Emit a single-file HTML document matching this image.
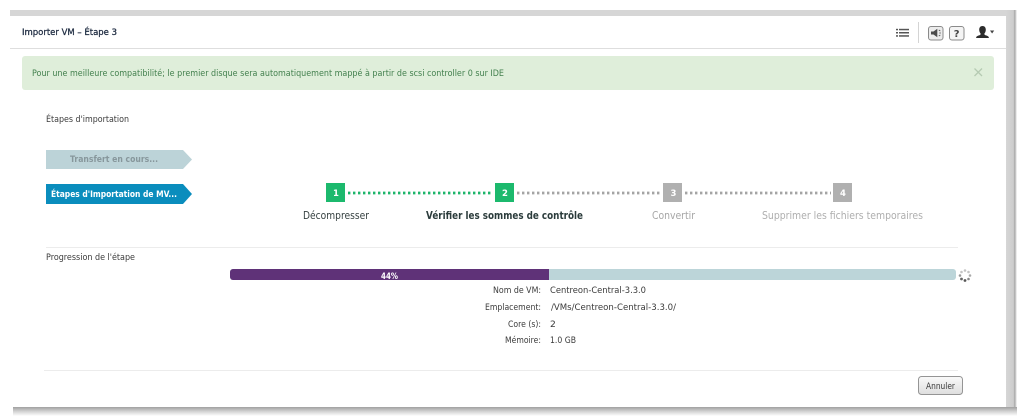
<!DOCTYPE html>
<html><head><meta charset="utf-8"><title>Importer VM</title>
<style>
html,body{margin:0;padding:0;background:#fff;width:1023px;height:417px;overflow:hidden}
svg{display:block}
text{font-family:"DejaVu Sans","Liberation Sans",sans-serif;font-size:9.2px;fill:#3a3a3a;filter:url(#b)}
.b{font-weight:bold}
.l{font-size:10.600px}
</style></head><body>
<svg width="1023" height="417" viewBox="0 0 1023 417" xmlns="http://www.w3.org/2000/svg">
<defs>
<filter id="b" x="-5%" y="-30%" width="110%" height="160%"><feGaussianBlur stdDeviation="0.25"/></filter>
<linearGradient id="sh" x1="0" y1="0" x2="0" y2="1"><stop offset="0" stop-color="#a0a0a0"/><stop offset="0.45" stop-color="#cfcfcf"/><stop offset="1" stop-color="#fff"/></linearGradient>
<linearGradient id="sr" x1="0" y1="0" x2="1" y2="0"><stop offset="0" stop-color="#d6d6d6"/><stop offset="0.68" stop-color="#cdcdcd"/><stop offset="0.8" stop-color="#a8a8a8"/><stop offset="1" stop-color="#fff"/></linearGradient>
<linearGradient id="btn" x1="0" y1="0" x2="0" y2="1"><stop offset="0" stop-color="#fafafa"/><stop offset="1" stop-color="#dedede"/></linearGradient>
</defs>
<rect width="1023" height="417" fill="#fff"/>
<!-- window frame -->
<rect x="10" y="10" width="1003" height="6" fill="#d6d6d6"/>
<rect x="1006" y="10" width="11" height="400" fill="url(#sr)"/>
<rect x="13" y="407" width="1004" height="9" fill="url(#sh)"/>
<rect x="10" y="16" width="996" height="391" fill="#fff"/>
<!-- header -->
<text x="22" y="35" textLength="95" lengthAdjust="spacingAndGlyphs" style="fill:#1f2c42;stroke:#1f2c42;stroke-width:.3">Importer VM – Étape 3</text>
<rect x="10" y="48" width="996" height="1" fill="#dedede"/>
<!-- list icon -->
<g fill="#555"><rect x="899" y="28.800" width="10" height="1.500"/><rect x="899" y="32" width="10" height="1.500"/><rect x="899" y="35.200" width="10" height="1.500"/><rect x="896" y="28.800" width="2" height="1.500"/><rect x="896" y="32" width="2" height="1.500"/><rect x="896" y="35.200" width="2" height="1.500"/></g>
<rect x="918" y="22" width="1" height="21" fill="#d4d4d4"/>
<!-- speaker -->
<rect x="928.500" y="26.500" width="14.500" height="13.500" rx="2.500" fill="#ececec" stroke="#8a8a8a"/>
<path d="M931 31.500h2.500l3.800-2.800v8.600l-3.800-2.800H931z" fill="#4a4a4a"/>
<path d="M938.800 30l1.500 1M939.200 33h1.800M938.800 36l1.500-1" fill="none" stroke="#555" stroke-width=".8"/>
<!-- help -->
<rect x="949.500" y="26.500" width="14.500" height="13.500" rx="2.500" fill="#f4f4f4" stroke="#8a8a8a"/>
<text x="953.700" y="37" class="b" style="font-size:10px;fill:#444">?</text>
<!-- user -->
<path d="M982.500 26c2.200 0 3.300 1.600 3.300 3.700 0 1.800-.8 3.200-1.500 4 .1.900.5 1.300 1.600 1.700 1.600.5 2.900.9 3 2.600h-12.800c.1-1.700 1.400-2.100 3-2.600 1.100-.4 1.500-.8 1.600-1.700-.7-.8-1.500-2.200-1.500-4 0-2.100 1.100-3.700 3.300-3.700z" fill="#2c2c2c"/>
<path d="M990 30.500h4.200l-2.100 3z" fill="#444"/>
<!-- alert -->
<rect x="22" y="56" width="972" height="34" rx="3" fill="#dfeeda"/>
<text x="32" y="76" textLength="472" lengthAdjust="spacingAndGlyphs" style="fill:#43804e">Pour une meilleure compatibilité; le premier disque sera automatiquement mappé à partir de scsi controller 0 sur IDE</text>
<path d="M974.500 68.500l7.500 7.500M982 68.500l-7.500 7.500" stroke="#b5cab2" stroke-width="1.300" fill="none"/>
<text x="46" y="122" textLength="83" lengthAdjust="spacingAndGlyphs">Étapes d'importation</text>
<!-- flow arrows -->
<path d="M46 150H183L192 159.500 183 169H46z" fill="#bcd3d8"/>
<text x="70" y="162" class="b" textLength="88" lengthAdjust="spacingAndGlyphs" style="fill:#87979c">Transfert en cours...</text>
<path d="M46 184H183L192 194 183 204H46z" fill="#0a8dbd"/>
<text x="51" y="197" class="b" textLength="126" lengthAdjust="spacingAndGlyphs" style="fill:#fff">Étapes d'Importation de MV...</text>
<!-- stepper -->
<line x1="348" y1="193" x2="493" y2="193" stroke="#1cb56a" stroke-width="2.800" stroke-dasharray="2.400 2.600"/>
<line x1="517" y1="193" x2="661" y2="193" stroke="#a4a4a4" stroke-width="2.800" stroke-dasharray="2.400 2.600"/>
<line x1="685" y1="193" x2="831" y2="193" stroke="#a4a4a4" stroke-width="2.800" stroke-dasharray="2.400 2.600"/>
<rect x="326" y="183" width="19" height="19" fill="#1cb96d"/>
<rect x="495" y="183" width="19" height="19" fill="#1cb96d"/>
<rect x="663" y="183" width="19" height="19" fill="#b0b0b0"/>
<rect x="833" y="183" width="19" height="19" fill="#b0b0b0"/>
<g><text x="333" y="196" class="b" style="fill:#fff;font-size:8.500px">1</text><text x="502" y="196" class="b" style="fill:#fff;font-size:8.500px">2</text><text x="670.500" y="196" class="b" style="fill:#fff;font-size:8.500px">3</text><text x="840" y="196" class="b" style="fill:#fff;font-size:8.500px">4</text></g>
<text x="303" y="219" class="l" textLength="66" lengthAdjust="spacingAndGlyphs" style="fill:#354040">Décompresser</text>
<text x="426" y="219" class="l b" textLength="157" lengthAdjust="spacingAndGlyphs" style="fill:#2a3a3a">Vérifier les sommes de contrôle</text>
<text x="652" y="219" class="l" textLength="43" lengthAdjust="spacingAndGlyphs" style="fill:#a6a6a6">Convertir</text>
<text x="762" y="219" class="l" textLength="161" lengthAdjust="spacingAndGlyphs" style="fill:#aeaeae">Supprimer les fichiers temporaires</text>
<rect x="46" y="247" width="912" height="1" fill="#ececec"/>
<text x="46" y="260" textLength="89" lengthAdjust="spacingAndGlyphs">Progression de l'étape</text>
<!-- progress -->
<rect x="230" y="269" width="726" height="11" rx="3" fill="#bcd5d9"/>
<path d="M549 269H233a3 3 0 0 0-3 3v5a3 3 0 0 0 3 3H549z" fill="#5f3278"/>
<text x="381" y="279" class="b" textLength="17" lengthAdjust="spacingAndGlyphs" style="fill:#fff;font-size:8.500px">44%</text>
<g><circle cx="965" cy="270.500" r="1.300" fill="#c4c4c4"/><circle cx="968.500" cy="272" r="1.300" fill="#c4c4c4"/><circle cx="970" cy="275.500" r="1.300" fill="#aaa"/><circle cx="968.500" cy="279" r="1.300" fill="#888"/><circle cx="965" cy="280.500" r="1.400" fill="#555"/><circle cx="961.500" cy="279" r="1.400" fill="#666"/><circle cx="960" cy="275.500" r="1.300" fill="#999"/><circle cx="961.500" cy="272" r="1.300" fill="#c4c4c4"/></g>
<!-- details -->
<text x="493" y="293" textLength="48" lengthAdjust="spacingAndGlyphs">Nom de VM:</text>
<text x="550" y="293" textLength="96" lengthAdjust="spacingAndGlyphs">Centreon-Central-3.3.0</text>
<text x="485" y="310" textLength="56" lengthAdjust="spacingAndGlyphs">Emplacement:</text>
<text x="551" y="310" textLength="125" lengthAdjust="spacingAndGlyphs">/VMs/Centreon-Central-3.3.0/</text>
<text x="508" y="327" textLength="33" lengthAdjust="spacingAndGlyphs">Core (s):</text>
<text x="550" y="327">2</text>
<text x="505" y="343" textLength="36" lengthAdjust="spacingAndGlyphs">Mémoire:</text>
<text x="550" y="343" textLength="26" lengthAdjust="spacingAndGlyphs">1.0 GB</text>
<rect x="44" y="370" width="914" height="1" fill="#ececec"/>
<!-- button -->
<rect x="918.500" y="376.500" width="44" height="18" rx="3" fill="url(#btn)" stroke="#959595"/>
<text x="926" y="389" textLength="29" lengthAdjust="spacingAndGlyphs">Annuler</text>
</svg>
</body></html>
